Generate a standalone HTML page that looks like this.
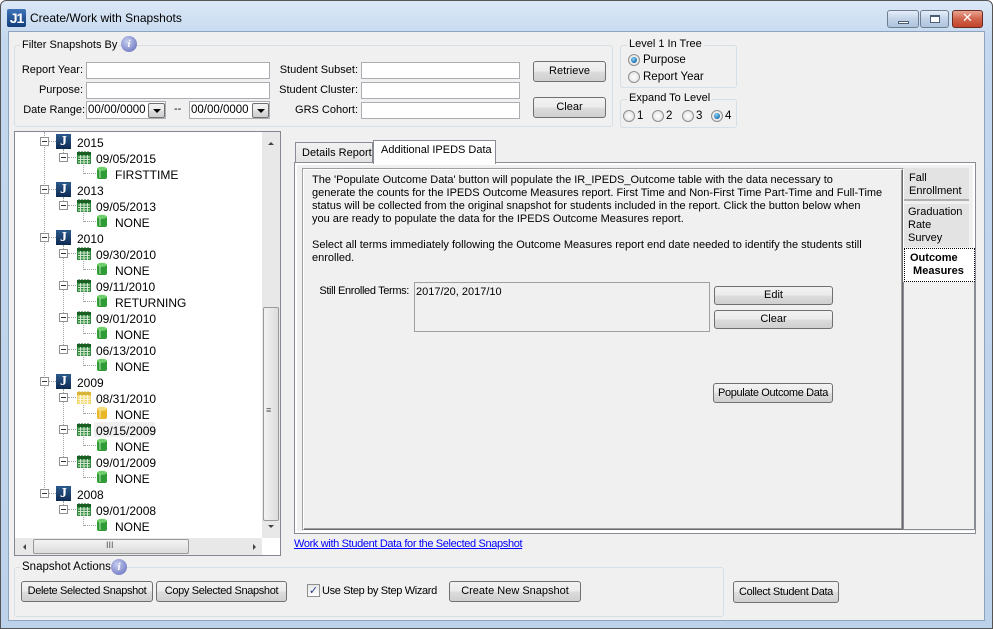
<!DOCTYPE html>
<html><head><meta charset="utf-8"><style>
*{box-sizing:border-box;margin:0;padding:0}
body{width:993px;height:629px;overflow:hidden;background:#fff;font-family:"Liberation Sans",sans-serif;font-size:11px;color:#000;position:relative}
.a{position:absolute}
.frame{left:0;top:0;width:993px;height:629px;background:linear-gradient(#dbe8f6,#c3d7ee 40px,#bcd2eb);border:1px solid #555;border-radius:6px 6px 0 0}
.client{left:8px;top:31px;width:977px;height:590px;background:#f0f0f0;border:1px solid #8da3bf}
.grp{border:1px solid #d5dfe5;border-radius:3px}
.gl{background:#f0f0f0;padding:0 2px;white-space:nowrap}
.inp{background:#fff;border:1px solid #abadb3;height:17px}
.btn{border:1px solid #707070;border-radius:3px;background:linear-gradient(#f2f2f2 0,#ebebeb 50%,#dddddd 50%,#cfcfcf);text-align:center;white-space:nowrap}
.t{white-space:nowrap}
.r{text-align:right}
.radio{width:12px;height:12px;border-radius:50%;border:1px solid #8e8f8f;background:radial-gradient(#fff,#dcdcdc)}
.radio.on::after{content:"";position:absolute;left:2px;top:2px;width:6px;height:6px;border-radius:50%;background:radial-gradient(circle at 40% 35%,#8ad4f8,#1a6fb0 70%,#0c3f75)}
.exp{width:9px;height:9px;border:1px solid #919191;background:#fff}
.exp::after{content:"";position:absolute;left:1px;top:3px;width:5px;height:1px;background:#333}
.vd{border-left:1px dotted #a0a0a0;width:1px}
.hd{border-top:1px dotted #a0a0a0;height:1px}
.jic{width:15px;height:15px;background:linear-gradient(#2c5a8e,#0d2a52);color:#fff;font:bold 14px "Liberation Serif",serif;text-align:center;line-height:15px}
.lnk{color:#00f;text-decoration:underline}
.sb{background:#e8e8e8}
.nar{letter-spacing:-0.35px}
</style></head><body>
<div class="a frame"></div>
<div class="a" style="left:7px;top:9px;width:19px;height:18px;background:linear-gradient(#3d74b8,#123d7a);border-radius:2px;color:#fff;font:bold 14px 'Liberation Sans',sans-serif;text-align:center;line-height:18px;letter-spacing:-1px">J1</div>
<div class="a t" style="left:30px;top:11px;font-size:12px">Create/Work with Snapshots</div>
<div class="a" style="left:887px;top:10px;width:32px;height:18px;border:1px solid #6d7e93;border-radius:3px;background:linear-gradient(#e6eef8,#c2d3e8 50%,#aec3dd)"><div class="a" style="left:10px;top:10px;width:11px;height:3px;background:#fff;border:1px solid #4b5d75"></div></div>
<div class="a" style="left:920px;top:10px;width:29px;height:18px;border:1px solid #6d7e93;border-radius:3px;background:linear-gradient(#e6eef8,#c2d3e8 50%,#aec3dd)"><div class="a" style="left:9px;top:4px;width:10px;height:8px;border:1px solid #4b5d75;border-top-width:2px;background:#fff"></div></div>
<div class="a" style="left:952px;top:10px;width:31px;height:18px;border:1px solid #6b2b22;border-radius:3px;background:linear-gradient(#e8a593,#d0634b 50%,#c2432b);color:#fff;font:bold 13px 'DejaVu Sans',sans-serif;text-align:center;line-height:16px">✕</div>
<div class="a client"></div>

<div class="a grp" style="left:14px;top:45px;width:599px;height:82px"></div>
<div class="a gl" style="left:20px;top:39px">Filter Snapshots By</div>
<div class="a" style="left:121px;top:36px;width:16px;height:16px;border-radius:50%;background:radial-gradient(circle at 40% 35%,#c9cff0,#5a66b8);color:#fff;font:bold italic 11px 'Liberation Serif',serif;text-align:center;line-height:16px">i</div>
<div class="a t r" style="left:10px;top:64px;width:73px">Report Year:</div>
<div class="a t r" style="left:10px;top:84px;width:73px">Purpose:</div>
<div class="a t r" style="left:10px;top:104px;width:75px">Date Range:</div>
<div class="a inp" style="left:86px;top:62px;width:184px"></div>
<div class="a inp" style="left:86px;top:82px;width:184px"></div>
<div class="a inp" style="left:86px;top:101px;width:80px;height:18px;font-size:11.5px;padding:2px 0 0 1px">00/00/0000</div>
<div class="a btn" style="left:148px;top:103px;width:17px;height:15px;border-radius:2px"><div class="a" style="left:4px;top:5px;border:4px solid transparent;border-top:4px solid #000"></div></div>
<div class="a t" style="left:174px;top:103px">--</div>
<div class="a inp" style="left:189px;top:101px;width:81px;height:18px;font-size:11.5px;padding:2px 0 0 1px">00/00/0000</div>
<div class="a btn" style="left:252px;top:103px;width:17px;height:15px;border-radius:2px"><div class="a" style="left:4px;top:5px;border:4px solid transparent;border-top:4px solid #000"></div></div>
<div class="a t r" style="left:270px;top:64px;width:88px">Student Subset:</div>
<div class="a t r" style="left:270px;top:84px;width:88px">Student Cluster:</div>
<div class="a t r" style="left:270px;top:104px;width:88px">GRS Cohort:</div>
<div class="a inp" style="left:361px;top:62px;width:159px"></div>
<div class="a inp" style="left:361px;top:82px;width:159px"></div>
<div class="a inp" style="left:361px;top:102px;width:159px"></div>
<div class="a btn" style="left:533px;top:61px;width:73px;height:21px;line-height:19px">Retrieve</div>
<div class="a btn" style="left:533px;top:97px;width:73px;height:21px;line-height:19px">Clear</div>

<div class="a grp" style="left:620px;top:45px;width:117px;height:43px"></div>
<div class="a gl" style="left:627px;top:38px">Level 1 In Tree</div>
<div class="a radio on" style="left:628px;top:54px"></div><div class="a t" style="left:643px;top:54px;font-size:11.5px">Purpose</div>
<div class="a radio" style="left:628px;top:71px"></div><div class="a t" style="left:643px;top:71px;font-size:11.5px">Report Year</div>
<div class="a grp" style="left:620px;top:99px;width:117px;height:29px"></div>
<div class="a gl" style="left:627px;top:92px">Expand To Level</div>
<div class="a radio" style="left:623px;top:110px"></div><div class="a t" style="left:637px;top:110px;font-size:11.5px">1</div>
<div class="a radio" style="left:652px;top:110px"></div><div class="a t" style="left:666px;top:110px;font-size:11.5px">2</div>
<div class="a radio" style="left:682px;top:110px"></div><div class="a t" style="left:696px;top:110px;font-size:11.5px">3</div>
<div class="a radio on" style="left:711px;top:110px"></div><div class="a t" style="left:725px;top:110px;font-size:11.5px">4</div>

<div class="a" style="left:14px;top:131px;width:267px;height:425px;border:1px solid #828790;background:#fff"></div>
<div class="a sb" style="left:262px;top:132px;width:18px;height:406px"></div>
<div class="a" style="left:268px;top:139px;border:3px solid transparent;border-bottom:3px solid #444"></div>
<div class="a" style="left:268px;top:525px;border:3px solid transparent;border-top:3px solid #444"></div>
<div class="a" style="left:263px;top:307px;width:16px;height:214px;border:1px solid #9a9a9a;border-radius:2px;background:linear-gradient(90deg,#f3f3f3,#dcdcdc)"></div>
<div class="a t" style="left:266px;top:405px;font-size:9px;color:#555">≡</div>
<div class="a sb" style="left:15px;top:538px;width:247px;height:17px"></div>
<div class="a" style="left:20px;top:544px;border:3px solid transparent;border-right:3px solid #444"></div>
<div class="a" style="left:253px;top:544px;border:3px solid transparent;border-left:3px solid #444"></div>
<div class="a" style="left:33px;top:539px;width:156px;height:15px;border:1px solid #9a9a9a;border-radius:2px;background:linear-gradient(#f3f3f3,#dcdcdc)"></div>
<div class="a t" style="left:106px;top:540px;font-size:9px;color:#555">III</div>
<div class="a vd" style="left:44px;top:132px;height:362px"></div>
<div id="tree"></div>

<div class="a" style="left:295px;top:142px;width:78px;height:21px;border:1px solid #898c95;border-bottom:none;background:linear-gradient(#f2f2f2,#e3e3e3)"></div>
<div class="a t" style="left:302px;top:147px">Details Report</div>
<div class="a" style="left:294px;top:162px;width:682px;height:372px;border:1px solid #898c95;background:#fff"></div>
<div class="a" style="left:373px;top:140px;width:123px;height:24px;border:1px solid #898c95;border-bottom:none;background:#fff"></div>
<div class="a t" style="left:381px;top:144px">Additional IPEDS Data</div>
<div class="a" style="left:297px;top:165px;width:676px;height:366px;background:#f0f0f0"></div>
<div class="a" style="left:302px;top:168px;width:602px;height:363px;border:1px solid #a0a0a0;border-right-color:#fff;border-bottom-color:#fff"></div>
<div class="a" style="left:303px;top:169px;width:600px;height:361px;border:1px solid #696969;border-top-color:#fff;border-left-color:#fff;box-shadow:inset -1px -1px 0 #a0a0a0"></div>
<div class="a" style="left:312px;top:174px;line-height:13px;font-size:11px;width:590px">The 'Populate Outcome Data' button will populate the IR_IPEDS_Outcome table with the data necessary to<br>generate the counts for the IPEDS Outcome Measures report. First Time and Non-First Time Part-Time and Full-Time<br>status will be collected from the original snapshot for students included in the report. Click the button below when<br>you are ready to populate the data for the IPEDS Outcome Measures report.<br><br>Select all terms immediately following the Outcome Measures report end date needed to identify the students still<br>enrolled.</div>
<div class="a t r nar" style="left:300px;top:285px;width:109px">Still Enrolled Terms:</div>
<div class="a" style="left:414px;top:282px;width:296px;height:50px;border:1px solid #a0a0a0;padding:3px 0 0 1px">2017/20, 2017/10</div>
<div class="a btn" style="left:714px;top:286px;width:119px;height:19px;line-height:17px">Edit</div>
<div class="a btn" style="left:714px;top:310px;width:119px;height:19px;line-height:17px">Clear</div>
<div class="a btn nar" style="left:713px;top:383px;width:120px;height:20px;line-height:18px">Populate Outcome Data</div>
<div class="a" style="left:903px;top:282px;width:72px;height:248px;border:1px solid #898c95;border-top:none;background:#f0f0f0"></div>
<div class="a" style="left:904px;top:168px;width:65px;height:33px;background:#e3e3e3;border-bottom:2px solid #b0b0b0"></div>
<div class="a" style="left:909px;top:172px;line-height:13px">Fall<br>Enrollment</div>
<div class="a" style="left:904px;top:204px;width:65px;height:43px;background:#e3e3e3"></div>
<div class="a" style="left:908px;top:206px;line-height:13px">Graduation<br>Rate<br>Survey</div>
<div class="a" style="left:904px;top:248px;width:71px;height:34px;background:#fff;border:1px dotted #000"></div>
<div class="a" style="left:910px;top:252px;line-height:13px;font-weight:bold">Outcome<br>&nbsp;Measures</div>

<div class="a t lnk nar" style="left:294px;top:538px">Work with Student Data for the Selected Snapshot</div>

<div class="a grp" style="left:14px;top:567px;width:710px;height:50px"></div>
<div class="a gl" style="left:20px;top:561px;font-size:11.5px">Snapshot Actions</div>
<div class="a" style="left:111px;top:559px;width:16px;height:16px;border-radius:50%;background:radial-gradient(circle at 40% 35%,#c9cff0,#5a66b8);color:#fff;font:bold italic 11px 'Liberation Serif',serif;text-align:center;line-height:16px">i</div>
<div class="a btn nar" style="left:21px;top:581px;width:132px;height:21px;line-height:19px">Delete Selected Snapshot</div>
<div class="a btn nar" style="left:156px;top:581px;width:131px;height:21px;line-height:19px">Copy Selected Snapshot</div>
<div class="a" style="left:307px;top:584px;width:13px;height:13px;border:1px solid #8e8f8f;background:linear-gradient(#e6e6e6,#fff);color:#2a3e8e;font:bold 11px 'DejaVu Sans';line-height:11px;text-align:center">✓</div>
<div class="a t nar" style="left:322px;top:585px">Use Step by Step Wizard</div>
<div class="a btn" style="left:449px;top:581px;width:132px;height:21px;line-height:19px">Create New Snapshot</div>
<div class="a btn nar" style="left:733px;top:581px;width:106px;height:22px;line-height:20px">Collect Student Data</div>

<script>
var rows=[[1,"2015"],[2,"09/05/2015"],[3,"FIRSTTIME"],[1,"2013"],[2,"09/05/2013"],[3,"NONE"],[1,"2010"],[2,"09/30/2010"],[3,"NONE"],[2,"09/11/2010"],[3,"RETURNING"],[2,"09/01/2010"],[3,"NONE"],[2,"06/13/2010"],[3,"NONE"],[1,"2009"],[2,"08/31/2010","y"],[3,"NONE","y"],[2,"09/15/2009","h"],[3,"NONE"],[2,"09/01/2009"],[3,"NONE"],[1,"2008"],[2,"09/01/2008"],[3,"NONE"]];
var h="",cal=function(c,d){return '<svg class="a" style="left:76px;top:%tpx" width="16" height="15"><rect x="1" y="2" width="14" height="12" fill="'+c+'"/><rect x="1" y="2" width="14" height="3" fill="'+d+'"/><path d="M2 7h12M2 9.5h12M2 12h12M4.5 5v9M8 5v9M11.5 5v9" stroke="#fff" stroke-width="1" opacity=".8"/><path d="M3 1v3M6 1v3M9 1v3M12 1v3" stroke="'+d+'"/></svg>';};
var cyl=function(c,d){return '<svg class="a" style="left:96px;top:%tpx" width="12" height="14"><rect x="1" y="2" width="10" height="11" rx="2" fill="'+c+'"/><ellipse cx="6" cy="2.8" rx="5" ry="2" fill="'+d+'"/><rect x="3" y="4" width="2" height="8" fill="#fff" opacity=".35"/></svg>';};
rows.forEach(function(r,i){var y=133+i*16,cy=y+8,ty=y+3;
 if(r[0]==1){h+='<div class="a hd" style="left:49px;top:'+cy+'px;width:7px"></div><div class="a exp" style="left:40px;top:'+(cy-4)+'px"></div><div class="a jic" style="left:56px;top:'+(y+1)+'px">J</div><div class="a t" style="left:77px;top:'+ty+'px;font-size:12px">'+r[1]+'</div>';
  var j=i+1,last=i;while(j<rows.length&&rows[j][0]!=1){if(rows[j][0]==2)last=j;j++;}
  h+='<div class="a vd" style="left:63px;top:'+(y+16)+'px;height:'+((last-i)*16-4)+'px"></div>';}
 else if(r[0]==2){var g=r[2]=="y";if(r[2]=="h")h+='<div class="a" style="left:94px;top:'+(y+1)+'px;width:61px;height:15px;background:#efefef"></div>';
  h+='<div class="a hd" style="left:68px;top:'+cy+'px;width:8px"></div><div class="a exp" style="left:59px;top:'+(cy-4)+'px"></div>'+(g?cal('#f2d76a','#d9b43a'):cal('#2f8a3a','#1b5e24')).replace('%t',y+1)+'<div class="a t" style="left:96px;top:'+ty+'px;font-size:12px">'+r[1]+'</div>';
  h+='<div class="a vd" style="left:83px;top:'+(y+16)+'px;height:9px"></div>';}
 else{var g=r[2]=="y";h+='<div class="a hd" style="left:84px;top:'+cy+'px;width:12px"></div>'+(g?cyl('#e8b828','#f5dc7a'):cyl('#2e9b34','#6fd06a')).replace('%t',y+1)+'<div class="a t" style="left:115px;top:'+ty+'px;font-size:12px">'+r[1]+'</div>';}
});
document.getElementById('tree').innerHTML=h;
</script>
</body></html>
